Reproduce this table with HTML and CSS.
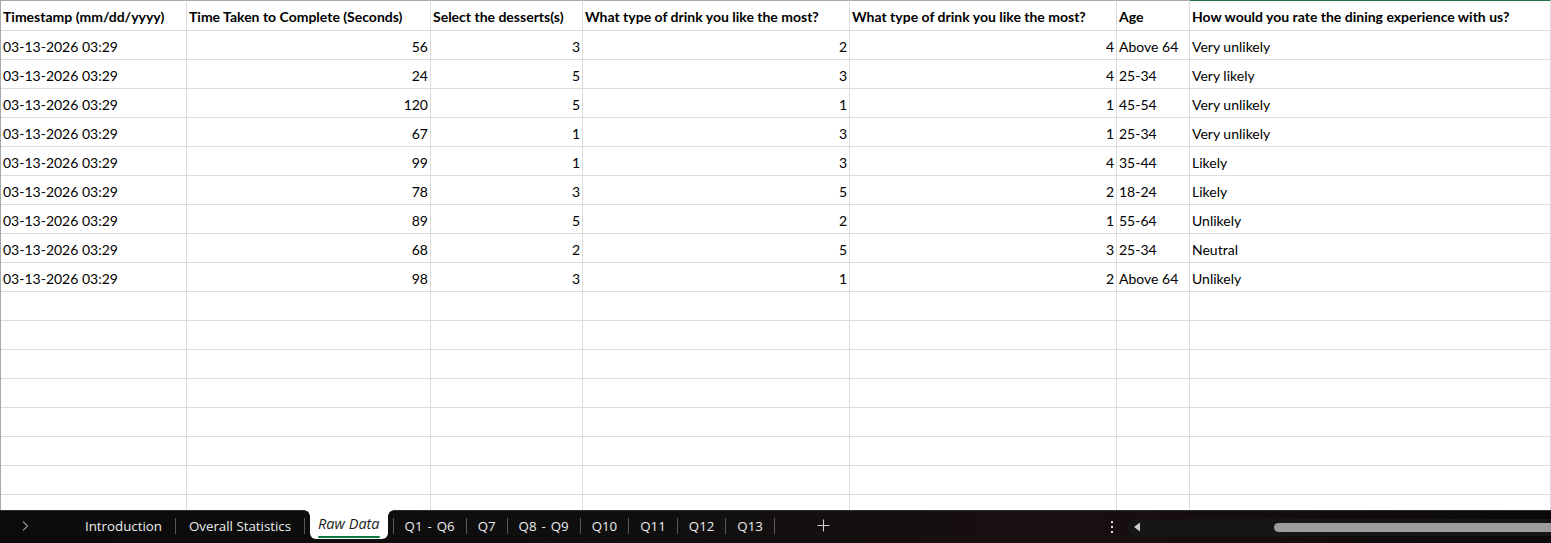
FILE: index.html
```html
<!DOCTYPE html>
<html>
<head>
<meta charset="utf-8">
<link rel="stylesheet" href="styles.css">
</head>
<body>
<div class="sheet">
  <div class="grid">
    <div class="c h">Timestamp (mm/dd/yyyy)</div>
    <div class="c h">Time Taken to Complete (Seconds)</div>
    <div class="c h">Select the desserts(s)</div>
    <div class="c h">What type of drink you like the most?</div>
    <div class="c h">What type of drink you like the most?</div>
    <div class="c h">Age</div>
    <div class="c h sel">How would you rate the dining experience with us?</div>

    <div class="c">03-13-2026 03:29</div><div class="c n">56</div><div class="c n">3</div><div class="c n">2</div><div class="c n">4</div><div class="c">Above 64</div><div class="c">Very unlikely</div>
    <div class="c">03-13-2026 03:29</div><div class="c n">24</div><div class="c n">5</div><div class="c n">3</div><div class="c n">4</div><div class="c">25-34</div><div class="c">Very likely</div>
    <div class="c">03-13-2026 03:29</div><div class="c n">120</div><div class="c n">5</div><div class="c n">1</div><div class="c n">1</div><div class="c">45-54</div><div class="c">Very unlikely</div>
    <div class="c">03-13-2026 03:29</div><div class="c n">67</div><div class="c n">1</div><div class="c n">3</div><div class="c n">1</div><div class="c">25-34</div><div class="c">Very unlikely</div>
    <div class="c">03-13-2026 03:29</div><div class="c n">99</div><div class="c n">1</div><div class="c n">3</div><div class="c n">4</div><div class="c">35-44</div><div class="c">Likely</div>
    <div class="c">03-13-2026 03:29</div><div class="c n">78</div><div class="c n">3</div><div class="c n">5</div><div class="c n">2</div><div class="c">18-24</div><div class="c">Likely</div>
    <div class="c">03-13-2026 03:29</div><div class="c n">89</div><div class="c n">5</div><div class="c n">2</div><div class="c n">1</div><div class="c">55-64</div><div class="c">Unlikely</div>
    <div class="c">03-13-2026 03:29</div><div class="c n">68</div><div class="c n">2</div><div class="c n">5</div><div class="c n">3</div><div class="c">25-34</div><div class="c">Neutral</div>
    <div class="c">03-13-2026 03:29</div><div class="c n">98</div><div class="c n">3</div><div class="c n">1</div><div class="c n">2</div><div class="c">Above 64</div><div class="c">Unlikely</div>

    <div class="c"></div><div class="c"></div><div class="c"></div><div class="c"></div><div class="c"></div><div class="c"></div><div class="c"></div>
    <div class="c"></div><div class="c"></div><div class="c"></div><div class="c"></div><div class="c"></div><div class="c"></div><div class="c"></div>
    <div class="c"></div><div class="c"></div><div class="c"></div><div class="c"></div><div class="c"></div><div class="c"></div><div class="c"></div>
    <div class="c"></div><div class="c"></div><div class="c"></div><div class="c"></div><div class="c"></div><div class="c"></div><div class="c"></div>
    <div class="c"></div><div class="c"></div><div class="c"></div><div class="c"></div><div class="c"></div><div class="c"></div><div class="c"></div>
    <div class="c"></div><div class="c"></div><div class="c"></div><div class="c"></div><div class="c"></div><div class="c"></div><div class="c"></div>
    <div class="c"></div><div class="c"></div><div class="c"></div><div class="c"></div><div class="c"></div><div class="c"></div><div class="c"></div>
    <div class="c"></div><div class="c"></div><div class="c"></div><div class="c"></div><div class="c"></div><div class="c"></div><div class="c"></div>
  </div>
</div>
<div class="tabbar">
  <div class="tabs">
    <span class="nav">
      <svg width="10" height="12" viewBox="0 0 10 12"><path d="M3 1.5 L7.5 6 L3 10.5" fill="none" stroke="#8a8a8a" stroke-width="1.2"/></svg>
    </span>
    <span class="tab">Introduction</span>
    <span class="sep"></span>
    <span class="tab">Overall Statistics</span>
    <span class="sep"></span>
    <span class="tab active"><span class="label">Raw Data</span></span>
    <span class="sep"></span>
    <span class="tab q">Q1 - Q6</span>
    <span class="sep"></span>
    <span class="tab q">Q7</span>
    <span class="sep"></span>
    <span class="tab q">Q8 - Q9</span>
    <span class="sep"></span>
    <span class="tab q">Q10</span>
    <span class="sep"></span>
    <span class="tab q">Q11</span>
    <span class="sep"></span>
    <span class="tab q">Q12</span>
    <span class="sep"></span>
    <span class="tab q">Q13</span>
    <span class="sep"></span>
    <span class="add">
      <svg width="13" height="13" viewBox="0 0 13 13"><path d="M6.5 0.5 V12.5 M0.5 6.5 H12.5" stroke="#d0d0d0" stroke-width="1.1"/></svg>
    </span>
  </div>
  <div class="scrollarea">
    <span class="dots">
      <svg width="4" height="14" viewBox="0 0 4 14"><rect x="1" y="1" width="2" height="2" fill="#e0e0e0"/><rect x="1" y="6" width="2" height="2" fill="#e0e0e0"/><rect x="1" y="11" width="2" height="2" fill="#e0e0e0"/></svg>
    </span>
    <div class="track">
      <svg class="arrow" width="8" height="10" viewBox="0 0 8 10"><path d="M7 0.5 V9.5 L1 5 Z" fill="#cfcfcf"/></svg>
      <div class="thumb"></div>
    </div>
  </div>
</div>
</body>
</html>
```

FILE: styles.css
```css
html, body {
  margin: 0;
  padding: 0;
  width: 1551px;
  height: 543px;
  overflow: hidden;
  background: #ffffff;
}

.sheet {
  height: 510px;
  overflow: hidden;
  border-left: 1px solid #a8a8a8;
  box-sizing: border-box;
}

.grid {
  display: grid;
  grid-template-columns: 186px 244px 152px 267px 267px 73px 1fr;
  grid-template-rows: 31px;
  grid-auto-rows: 29px;
  font-family: Lato, "Liberation Sans", sans-serif;
  font-size: 14px;
  color: #000;
}

.c {
  box-sizing: border-box;
  border-right: 1px solid #dcdcdc;
  border-bottom: 1px solid #dcdcdc;
  padding: 2px 2px 0 2px;
  display: flex;
  align-items: center;
  white-space: nowrap;
  overflow: hidden;
}

.c.h {
  font-weight: bold;
  border-top: 1px solid #a8a8a8;
  padding-top: 1px;
}

.c.h.sel {
  border-top-color: #217346;
}

.c.n {
  justify-content: flex-end;
}

.tabbar {
  height: 33px;
  display: flex;
  align-items: stretch;
  background: linear-gradient(90deg, #0b0b0b 0%, #0f0f0f 40%, #1a0f10 70%, #150d0e 82%, #0a0a0a 100%);
  border-top: 1px solid #2e2e2e;
  box-sizing: border-box;
  font-family: "Open Sans", "Noto Sans", sans-serif;
  font-size: 13.3px;
  color: #ececec;
}

.tabs {
  display: flex;
  align-items: center;
  width: 1100px;
  padding-bottom: 3px;
  box-sizing: border-box;
}

.nav {
  width: 50px;
  display: flex;
  justify-content: center;
  margin-right: 22px;
}

.tab {
  padding: 0 13px;
  line-height: 28px;
  position: relative;
}

.tab.q {
  padding: 0 11px;
  word-spacing: 1.5px;
}

.tab.active {
  background: #ffffff;
  color: #1a1a1a;
  font-style: italic;
  font-size: 14.5px;
  align-self: stretch;
  margin: -1px 5px 1px 5px;
  padding: 0 8px;
  border-radius: 0 0 6px 6px;
  display: flex;
  align-items: center;
}

.tab.active .label {
  position: relative;
  line-height: 22px;
  margin-top: -2px;
}

.tab.active .label::after {
  content: "";
  position: absolute;
  left: 0;
  right: 0;
  bottom: -3px;
  height: 2px;
  border-radius: 1px;
  background: #107c41;
}

.tab.active::before,
.tab.active::after {
  content: "";
  position: absolute;
  top: 0;
  width: 6px;
  height: 6px;
}

.tab.active::before {
  left: -6px;
  background: radial-gradient(circle at 0 100%, transparent 5.5px, #ffffff 6px);
}

.tab.active::after {
  right: -6px;
  background: radial-gradient(circle at 100% 100%, transparent 5.5px, #ffffff 6px);
}

.sep {
  width: 1px;
  height: 16px;
  background: #5a5a5a;
}

.add {
  margin-left: 42px;
  display: flex;
  align-items: center;
}

.scrollarea {
  flex: 1;
  display: flex;
  align-items: center;
}

.dots {
  width: 24px;
  display: flex;
  justify-content: center;
  margin-right: 4px;
}

.track {
  flex: 1;
  height: 17px;
  background: #161616;
  border-radius: 8px 0 0 8px;
  display: flex;
  align-items: center;
  padding-left: 5px;
}

.arrow {
  margin-right: 133px;
}

.thumb {
  flex: 1;
  height: 9px;
  background: #9c9c9c;
  border-radius: 5px 0 0 5px;
}
```
